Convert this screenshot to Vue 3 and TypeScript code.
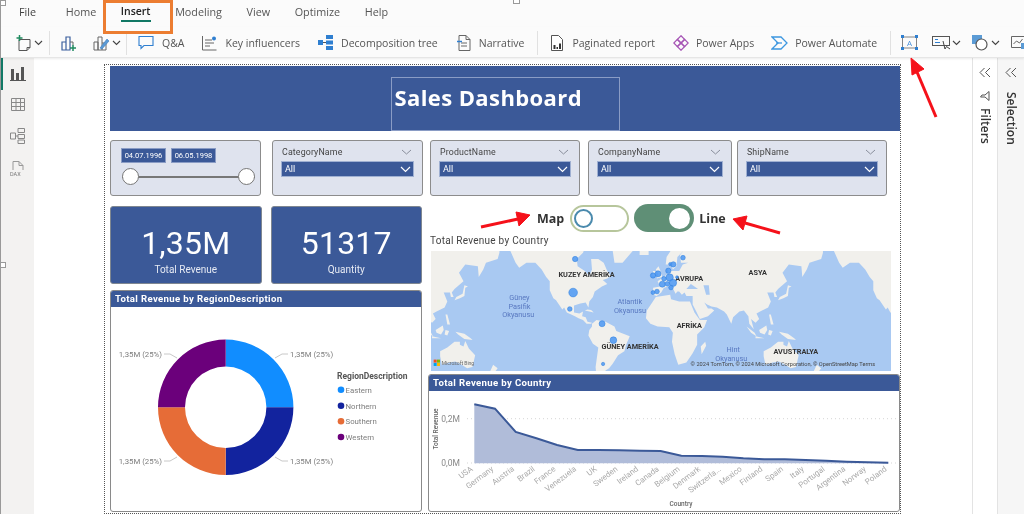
<template>
  <div class="app">
    <div class="tabs">
      <span v-for="tab in tabs" :key="tab" class="tab" :class="{ active: tab === 'Insert' }">{{ tab }}</span>
    </div>

    <div class="toolbar">
      <span class="tool first">
        <svg width="15" height="18" viewBox="0 0 15 18" fill="none"><path d="M3 5.500h11v8l-3 3H3z" stroke="#555"/><path d="M11 16.500v-3h3" stroke="#555"/><path d="M3.500 1v6M.5 4h6" stroke="#1f8a5f" stroke-width="1.500"/></svg>
        <svg class="chev" width="9" height="6" viewBox="0 0 9 6"><path d="M1 1l3.500 3.500L8 1" fill="none" stroke="#444" stroke-width="1.100"/></svg>
      </span>
      <i class="sep s1"></i>
      <span class="tool t-viz">
        <svg width="15" height="18" viewBox="0 0 15 18" fill="none"><path d="M1 8h4v8H1zM5 3h4v13H5z" stroke="#3a5f9e" stroke-width="1.200"/><path d="M9 8h3v3" stroke="#666"/><path d="M12 11v6M9 14h6" stroke="#1f8a5f" stroke-width="1.500"/></svg>
      </span>
      <span class="tool t-custom">
        <svg width="17" height="18" viewBox="0 0 17 18" fill="none"><path d="M1 8h4v8H1zM5 3h4v13H5zM9 9h4v7H9" stroke="#666"/><path d="M7 14L14 5l2 2-7 8z" fill="#5b9bd5" stroke="#3a7cc0" stroke-width=".6"/></svg>
        <svg class="chev" width="9" height="6" viewBox="0 0 9 6"><path d="M1 1l3.500 3.500L8 1" fill="none" stroke="#444" stroke-width="1.100"/></svg>
      </span>
      <i class="sep s2"></i>
      <span class="tool t-qa">
        <svg width="16" height="15" viewBox="0 0 16 15" fill="none"><path d="M1 1.500h14v9H6l-3 3v-3H1z" stroke="#2f7fd0" stroke-width="1.100"/></svg>
        <span>Q&amp;A</span>
      </span>
      <span class="tool t-key">
        <svg width="16" height="16" viewBox="0 0 16 16" fill="none"><path d="M1.500 1v14h14" stroke="#666"/><path d="M4 5h7M4 8h9M4 11h5" stroke="#666"/><circle cx="13" cy="3.500" r="2" fill="#2f7fd0"/></svg>
        <span>Key influencers</span>
      </span>
      <span class="tool t-dec">
        <svg width="16" height="15" viewBox="0 0 16 15"><rect x="0" y="5" width="5" height="5" fill="#2f7fd0"/><rect x="8" y="0" width="7" height="4" fill="#2f7fd0"/><rect x="8" y="5.500" width="7" height="4" fill="#2f7fd0"/><rect x="8" y="11" width="7" height="4" fill="#2f7fd0"/><path d="M5 7.500h3" stroke="#555"/></svg>
        <span>Decomposition tree</span>
      </span>
      <span class="tool t-nar">
        <svg width="14" height="16" viewBox="0 0 14 16" fill="none"><path d="M2 .5h7l4 4v11H2z" stroke="#666"/><path d="M9 .5v4h4" stroke="#666"/><path d="M4 8h6M4 11h6" stroke="#666"/><path d="M0 6.500h5" stroke="#2f7fd0" stroke-width="1.500"/></svg>
        <span>Narrative</span>
      </span>
      <i class="sep s3"></i>
      <span class="tool t-pag">
        <svg width="12" height="16" viewBox="0 0 12 16"><path d="M.5.500h7l4 4v11H.5z" fill="#fff" stroke="#555"/><path d="M2.500 10h2v4h-2zM5.500 12h1.500v2H5.500zM8 8.500h2V14H8z" fill="#333"/></svg>
        <span>Paginated report</span>
      </span>
      <span class="tool t-apps">
        <svg width="16" height="16" viewBox="0 0 16 16" fill="none" stroke="#a654b5" stroke-width="1.300"><path d="M8 .8L11.600 4.400 8 8 4.400 4.400z"/><path d="M11.600 4.400L15.200 8 11.600 11.600 8 8z"/><path d="M4.400 4.400L8 8 4.400 11.600.8 8z"/><path d="M8 8L11.600 11.600 8 15.200 4.400 11.600z"/></svg>
        <span>Power Apps</span>
      </span>
      <span class="tool t-auto">
        <svg width="17" height="14" viewBox="0 0 17 14" fill="none" stroke="#3d97e0" stroke-width="1.300"><path d="M1 1h9l6 6-6 6H1l6-6z"/><path d="M5 7h6"/></svg>
        <span>Power Automate</span>
      </span>
      <i class="sep s4"></i>
      <span class="tool t-box">
        <svg width="17" height="15" viewBox="0 0 17 15"><rect x="1.500" y="2" width="14" height="11" fill="none" stroke="#666" stroke-width=".8"/><text x="8.500" y="11" text-anchor="middle" font-size="8" fill="#4a90d9">A</text><g fill="#2f7fd0"><rect x="0" y="0" width="3" height="3"/><rect x="14" y="0" width="3" height="3"/><rect x="0" y="12" width="3" height="3"/><rect x="14" y="12" width="3" height="3"/></g></svg>
      </span>
      <span class="tool t-btn">
        <svg width="20" height="15" viewBox="0 0 20 15" fill="none"><rect x=".5" y="1.500" width="17" height="9" stroke="#555"/><path d="M3 4.500h3M3 7.500h5" stroke="#2f7fd0" stroke-width="1.200"/><path d="M11 6l2 8 1.500-2.500L18 14" stroke="#444"/></svg>
        <svg class="chev" width="9" height="6" viewBox="0 0 9 6"><path d="M1 1l3.500 3.500L8 1" fill="none" stroke="#444" stroke-width="1.100"/></svg>
      </span>
      <span class="tool t-shape">
        <svg width="16" height="16" viewBox="0 0 16 16" fill="none"><rect x="0" y="0" width="10" height="9" fill="#5b9bd5"/><circle cx="9.500" cy="9.500" r="5.500" fill="#fff" stroke="#555" stroke-width="1.200"/></svg>
        <svg class="chev" width="9" height="6" viewBox="0 0 9 6"><path d="M1 1l3.500 3.500L8 1" fill="none" stroke="#444" stroke-width="1.100"/></svg>
      </span>
      <span class="tool t-last">
        <svg width="17" height="15" viewBox="0 0 17 15" fill="none"><path d="M.5 1.500h14v11H.5z" stroke="#666"/><path d="M2.500 9l3-3 3 2 3-4" stroke="#666"/><rect x="10" y="8" width="7" height="6" fill="#5b9bd5"/></svg>
      </span>
    </div>

    <div class="main">
      <div class="rail">
        <span class="rail-active"></span>
        <svg width="16" height="15" viewBox="0 0 16 15"><path d="M1 3h3v11H1zM6 7h3v7H6zM11 1h3v13h-3z" fill="#555"/><path d="M0 14.500h16" stroke="#555"/></svg>
        <svg width="14" height="13" viewBox="0 0 14 13" fill="none" stroke="#888"><path d="M.5.500h13v12H.5zM.5 4.500h13M.5 8.500h13M5 .5v12M9.500.5v12"/></svg>
        <svg width="15" height="16" viewBox="0 0 15 16" fill="none" stroke="#888"><path d="M.5 5h5v6h-5zM8 .5h6.500v4H8zM8 6.500h6.500v4H8zM8 12h6.500v3.500H8zM5.500 8H8"/></svg>
        <svg width="15" height="17" viewBox="0 0 15 17" fill="none" stroke="#999"><path d="M3 9V.5h6l4 4V9M9 .5v4h4"/><text x="0" y="15" font-size="5.500" fill="#777" stroke="none" font-family="Roboto">DAX</text></svg>
      </div>

      <div class="canvas">
        <div class="report">
          <div class="report-head">
            <div class="title-box">Sales Dashboard</div>
          </div>

          <div class="slicers">
            <div class="slicer date-slicer">
              <div class="dates"><span>04.07.1996</span><span>06.05.1998</span></div>
              <div class="slider"><i></i><i></i></div>
            </div>
            <div
              v-for="s in slicers"
              :key="s.name"
              class="slicer"
              :style="{ width: s.width + 'px', marginLeft: s.gap + 'px' }"
            >
              <div class="slicer-name">
                <span>{{ s.name }}</span>
                <svg width="11" height="6" viewBox="0 0 11 6"><path d="M1 1l4.500 4L10 1" fill="none" stroke="#8a8f9c"/></svg>
              </div>
              <div class="select">
                <span>All</span>
                <svg width="11" height="7" viewBox="0 0 11 7"><path d="M1 1l4.500 4.500L10 1" fill="none" stroke="#fff" stroke-width="1.200"/></svg>
              </div>
            </div>
          </div>

          <div class="columns">
            <div class="col-left">
              <div class="cards">
                <div class="card">
                  <div class="card-value">1,35M</div>
                  <div class="card-label">Total Revenue</div>
                </div>
                <div class="card">
                  <div class="card-value">51317</div>
                  <div class="card-label">Quantity</div>
                </div>
              </div>

              <div class="panel region-panel">
                <div class="panel-title">Total Revenue by RegionDescription</div>
                <svg class="chart" viewBox="111 307 310 204">
                  <path v-for="seg in donut" :key="seg.name" :d="seg.path" :fill="seg.color" />
                  <g v-for="l in donutLabels" :key="l.line">
                    <path :d="l.line" fill="none" stroke="#c8c8c8" />
                    <text :x="l.x" :y="l.y" :text-anchor="l.anchor" class="data-label">1,35M (25%)</text>
                  </g>
                  <text x="337" y="379" class="legend-title">RegionDescription</text>
                  <g v-for="seg in donut" :key="seg.name + 'l'">
                    <circle cx="341" :cy="seg.ly" r="3.300" :fill="seg.color" />
                    <text x="345.500" :y="seg.ly + 3" class="legend-item">{{ seg.name }}</text>
                  </g>
                </svg>
              </div>
            </div>

            <div class="col-right">
              <div class="toggle-row">
                <span class="toggle-text map-text">Map</span>
                <span class="toggle off"><i></i></span>
                <span class="toggle on"><i></i></span>
                <span class="toggle-text">Line</span>
              </div>
              <div class="map-title">Total Revenue by Country</div>
              <svg class="map" viewBox="18 48 1382 358" preserveAspectRatio="none">
                <rect x="18" y="48" width="1382" height="358" fill="#a9c9f2" />
                <path :d="landPath" fill="#f1f0ec" />
                <path :d="inlandSeaPath" fill="#a9c9f2" />
                <text v-for="m in mapLabels" :key="m.t" :x="m.x" :y="m.y" class="map-label">{{ m.t }}</text>
                <text v-for="m in seaLabels" :key="m.t + m.y" :x="m.x" :y="m.y" class="sea-label">{{ m.t }}</text>
                <circle
                  v-for="(b, i) in bubbles"
                  :key="'b' + i"
                  :cx="b[0]"
                  :cy="b[1]"
                  :r="b[2]"
                  fill="#4a97f3"
                  fill-opacity=".85"
                  stroke="#2f7fdc"
                  stroke-width="1.500"
                />
                <rect x="26" y="372" width="9" height="9" fill="#f25022" />
                <rect x="36" y="372" width="9" height="9" fill="#7fba00" />
                <rect x="26" y="382" width="9" height="9" fill="#00a4ef" />
                <rect x="36" y="382" width="9" height="9" fill="#ffb900" />
                <text x="50" y="387" class="bing">Microsoft Bing</text>
                <text x="798" y="392" class="copy">© 2024 TomTom, © 2024 Microsoft Corporation, © OpenStreetMap</text>
                <text x="1305" y="392" class="copy">Terms</text>
              </svg>

              <div class="panel line-panel">
                <div class="panel-title">Total Revenue by Country</div>
                <svg class="chart" viewBox="429 391 470 120">
                  <path d="M467 418.700H899M467 463H899" stroke="#d5d5d5" stroke-dasharray="1 3" fill="none" />
                  <path :d="areaPath" fill="#b0bcd9" />
                  <path :d="linePath" fill="none" stroke="#3b5998" stroke-width="2" />
                  <text x="460" y="422" text-anchor="end" class="axis">0,2M</text>
                  <text x="460" y="466" text-anchor="end" class="axis">0,0M</text>
                  <text transform="translate(438 429) rotate(-90)" text-anchor="middle" class="axis-title">Total Revenue</text>
                  <text
                    v-for="(p, i) in countries"
                    :key="p.name"
                    :transform="`translate(${xAt(i) - 1} 470) rotate(-37)`"
                    text-anchor="end"
                    class="tick"
                  >{{ p.name }}</text>
                  <text x="681" y="506" text-anchor="middle" class="axis-title">Country</text>
                </svg>
              </div>
            </div>
          </div>
        </div>
      </div>

      <div class="side-pane filters">
        <svg width="12" height="11" viewBox="0 0 12 11" fill="none" stroke="#555"><path d="M5.500 1L1 5.500 5.500 10M11 1L6.500 5.500 11 10"/></svg>
        <svg class="funnel" width="10" height="10" viewBox="0 0 10 10" fill="none" stroke="#555"><path d="M.5 1h9L6 5v4.500L4 8V5z" transform="rotate(90 5 5)"/></svg>
        <span class="side-text">Filters</span>
      </div>
      <div class="side-pane selection">
        <svg width="12" height="11" viewBox="0 0 12 11" fill="none" stroke="#555"><path d="M5.500 1L1 5.500 5.500 10M11 1L6.500 5.500 11 10"/></svg>
        <span class="side-text">Selection</span>
      </div>
    </div>

    <svg class="marks" width="1024" height="514" viewBox="0 0 1024 514">
      <rect x="104.500" y="1.500" width="67" height="31" fill="none" stroke="#ec7d31" stroke-width="3" />
      <g fill="#fff" stroke="#999">
        <rect x="0.500" y="0.500" width="5" height="5" />
        <rect x="513.500" y="-2.500" width="6" height="6" />
        <rect x="0.500" y="262.500" width="5" height="5" />
      </g>
      <g fill="#f5111a" stroke="#f5111a">
        <path d="M936 117L917 72" stroke-width="3" />
        <path d="M911 58L924 69 912 75z" />
        <path d="M481 227L518 219" stroke-width="3" />
        <path d="M530 215L516 212 519 226z" />
        <path d="M780 233L745 223" stroke-width="3" />
        <path d="M733 219L747 216 743 230z" />
      </g>
    </svg>
  </div>
</template>

<script setup lang="ts">
const tabs = ["File", "Home", "Insert", "Modeling", "View", "Optimize", "Help"];

const slicers = [
  { name: "CategoryName", width: 151, gap: 11 },
  { name: "ProductName", width: 150, gap: 7 },
  { name: "CompanyName", width: 144, gap: 8 },
  { name: "ShipName", width: 150, gap: 5 },
];

// donut is drawn in page coordinates, the viewBox of the chart matches them
const cx = 225.7;
const cy = 407.3;
const outer = 67.7;
const inner = 40.7;

const arc = (from: number, to: number) => {
  const pt = (r: number, a: number) => {
    const rad = ((a - 90) * Math.PI) / 180;
    return `${(cx + r * Math.cos(rad)).toFixed(2)} ${(cy + r * Math.sin(rad)).toFixed(2)}`;
  };
  return `M${pt(outer, from)}A${outer} ${outer} 0 0 1 ${pt(outer, to)}L${pt(inner, to)}A${inner} ${inner} 0 0 0 ${pt(inner, from)}Z`;
};

const donut = [
  { name: "Eastern", color: "#118dff", path: arc(0, 90), ly: 389.7 },
  { name: "Northern", color: "#12239e", path: arc(90, 180), ly: 405.7 },
  { name: "Southern", color: "#e66c37", path: arc(180, 270), ly: 421.3 },
  { name: "Western", color: "#6b007b", path: arc(270, 360), ly: 437 },
];

const donutLabels = [
  { line: "M275 358L282 354H288", x: 290, y: 357, anchor: "start" },
  { line: "M275 457L282 461H288", x: 290, y: 464, anchor: "start" },
  { line: "M177 358L170 354H164", x: 162, y: 357, anchor: "end" },
  { line: "M177 457L170 461H164", x: 162, y: 464, anchor: "end" },
];

// coarse coastlines as lon,lat lists, mercator projected and repeated because the map wraps
const WORLD = 972;
const project = (lon: number, lat: number, shift: number) => {
  const m = Math.log(Math.tan(Math.PI / 4 + (lat * Math.PI) / 360));
  return `${(445 + (lon + 98) * 2.7 + shift).toFixed(1)} ${(286.5 - 154.7 * m).toFixed(1)}`;
};

const toPath = (polys: number[][]) =>
  [-WORLD, 0, WORLD]
    .map((shift) =>
      polys
        .map((poly) => {
          const pts: string[] = [];
          for (let i = 0; i < poly.length; i += 2) pts.push(project(poly[i], poly[i + 1], shift));
          return `M${pts.join("L")}Z`;
        })
        .join(""),
    )
    .join("");

const landPath = toPath([
  // north and central america
  [-168, 66, -162, 60, -158, 57, -150, 60, -140, 60, -133, 56, -128, 51, -124, 48, -124, 41, -120, 34, -117, 32, -110, 23, -108, 25, -105, 20, -96, 16, -92, 14, -87, 12, -83, 8, -78, 8, -77, 9, -82, 10, -84, 15, -88, 16, -87, 21, -91, 19, -97, 20, -97, 27, -90, 29, -84, 30, -81, 25, -80, 31, -76, 35, -74, 40, -70, 42, -66, 44, -60, 46, -65, 49, -60, 50, -56, 52, -60, 55, -64, 60, -70, 62, -78, 62, -77, 56, -80, 52, -85, 55, -93, 58, -94, 62, -87, 65, -80, 72, -168, 72],
  [-52, 60, -43, 60, -22, 70, -20, 75, -60, 75, -54, 66],
  [-24, 64, -14, 64, -14, 66.5, -24, 66.5],
  [-85, 22, -75, 20, -78, 22.5, -82, 23],
  // south america
  [-77, 8, -72, 12, -62, 10, -52, 5, -50, 0, -35, -6, -39, -15, -41, -22, -48, -26, -54, -34, -58, -38, -62, -40, -65, -45, -72, -45, -73, -37, -70, -18, -76, -14, -81, -5, -80, 1, -77, 5],
  // africa
  [-6, 35, 10, 37, 11, 33, 20, 31, 32, 31, 37, 20, 43, 12, 51, 12, 48, 4, 40, -4, 40, -15, 35, -24, 28, -33, 19, -35, 15, -25, 12, -12, 13, -2, 9, 4, -4, 5, -12, 8, -17, 14, -16, 22, -10, 30],
  [49, -12, 50, -16, 45, -25, 44, -17],
  // eurasia
  [-9, 37, -9, 43, -1, 44, -4, 48, 3, 51, 8, 54, 8, 57, 11, 55, 20, 55, 24, 59, 30, 60, 22, 60, 21, 64, 25, 66, 18, 63, 17, 58, 13, 56, 11, 59, 5, 59, 6, 63, 14, 68, 25, 71, 40, 67, 70, 72, 140, 73, 180, 70, 180, 65, 178, 62, 165, 60, 162, 56, 157, 51, 156, 58, 142, 59, 135, 54, 140, 48, 130, 42, 127, 39, 129, 35, 126, 35, 125, 39, 121, 39, 118, 39, 122, 31, 119, 25, 110, 21, 106, 19, 109, 13, 105, 9, 100, 13, 103, 2, 98, 8, 97, 16, 92, 22, 87, 21, 80, 15, 78, 8, 73, 18, 70, 21, 62, 25, 56, 26, 51, 28, 48, 30, 52, 24, 56, 24, 59, 22, 52, 16, 43, 13, 39, 21, 35, 28, 35, 36, 28, 36, 26, 39, 23, 37, 20, 40, 18, 40, 16, 38, 12, 44, 8, 44, 3, 43, 0, 39, -5, 36],
  [-5, 50, 1, 51, 0, 54, -3, 58, -6, 56, -3, 53],
  [-10, 52, -6, 52, -6, 55, -9, 55],
  // japan, islands of south east asia
  [130, 32, 136, 34, 141, 36, 142, 43, 145, 44, 141, 45, 139, 38, 132, 35],
  [95, 5, 104, -2, 106, -6, 100, -2],
  [109, 1, 117, 6, 118, 1, 115, -4, 110, -2],
  [105, -6, 115, -8, 105, -8],
  [120, 1, 124, 0, 122, -5, 119, -4],
  [131, -1, 141, -3, 148, -8, 150, -10, 141, -9, 134, -4],
  [120, 18, 122, 18, 125, 7, 122, 7],
  // australia, new zealand
  [114, -22, 122, -18, 130, -12, 136, -12, 136, -15, 140, -17, 142, -11, 146, -19, 153, -26, 150, -37, 144, -38, 138, -35, 131, -32, 124, -33, 116, -35, 114, -27],
  [173, -35, 178, -38, 170, -46, 167, -45],
]);

const inlandSeaPath = toPath([
  [28, 42, 33, 46, 41, 42, 35, 42],
  [47, 45, 53, 45, 54, 37, 50, 37],
]);

const mapLabels = [
  { t: "KUZEY AMERİKA", x: 401, y: 126 },
  { t: "AVRUPA", x: 752, y: 138 },
  { t: "ASYA", x: 972, y: 119 },
  { t: "AFRİKA", x: 756, y: 279 },
  { t: "GÜNEY AMERİKA", x: 530, y: 339 },
  { t: "AVUSTRALYA", x: 1047, y: 355 },
];

const seaLabels = [
  { t: "Güney", x: 253, y: 195 },
  { t: "Pasifik", x: 251, y: 220 },
  { t: "Okyanusu", x: 232, y: 246 },
  { t: "Atlantik", x: 578, y: 206 },
  { t: "Okyanusu", x: 568, y: 232 },
  { t: "Hint", x: 906, y: 350 },
  { t: "Okyanusu", x: 872, y: 376 },
];

const bubbles = [
  [451, 72, 8], [445, 172, 13], [435, 221, 7], [532, 265, 9], [566, 314, 10], [535, 385, 5],
  [775, 68, 7], [737, 87, 5], [746, 88, 8], [731, 107, 8], [685, 121, 8], [700, 116, 9],
  [718, 131, 7], [735, 127, 11], [757, 126, 4], [713, 147, 9], [728, 146, 7], [745, 143, 11],
  [739, 157, 7], [685, 172, 6], [697, 169, 7],
];

const countries = [
  { name: "USA", y: 404.3 },
  { name: "Germany", y: 408.7 },
  { name: "Austria", y: 432 },
  { name: "Brazil", y: 438.3 },
  { name: "France", y: 445 },
  { name: "Venezuela", y: 450 },
  { name: "UK", y: 450 },
  { name: "Sweden", y: 450.3 },
  { name: "Ireland", y: 450.7 },
  { name: "Canada", y: 451 },
  { name: "Belgium", y: 455.7 },
  { name: "Denmark", y: 456 },
  { name: "Switzerla...", y: 456.7 },
  { name: "Mexico", y: 458.3 },
  { name: "Finland", y: 459.3 },
  { name: "Spain", y: 459.3 },
  { name: "Italy", y: 460 },
  { name: "Portugal", y: 460.7 },
  { name: "Argentina", y: 461.7 },
  { name: "Norway", y: 462.3 },
  { name: "Poland", y: 462.7 },
];

const xAt = (i: number) => 474.3 + 20.7 * i;

const linePath = countries.map((p, i) => `${i ? "L" : "M"}${xAt(i).toFixed(1)} ${p.y}`).join("");
const areaPath = `${linePath}L${xAt(20).toFixed(1)} 463.3L${xAt(0).toFixed(1)} 463.3Z`;
</script>

<style scoped>
.app {
  position: relative;
  width: 1024px;
  height: 514px;
  overflow: hidden;
  background: #fff;
  display: flex;
  flex-direction: column;
  border-left: 1px solid #999;
  box-sizing: border-box;
  font-family: "Open Sans", "Liberation Sans", sans-serif;
  filter: blur(0.35px);
}

.tabs {
  height: 27px;
  flex-shrink: 0;
  display: flex;
  align-items: flex-start;
  padding: 4px 0 0 18px;
  gap: 24.6px;
  background: #fbfbfb;
  box-sizing: border-box;
}

.tab {
  position: relative;
  font-size: 10.8px;
  line-height: 15px;
  color: #555;
}

.tab:first-child {
  margin-right: 5px;
  color: #444;
}

.tab.active {
  color: #222;
  font-weight: 600;
  font-size: 10.5px;
}

.tab.active::after {
  content: "";
  position: absolute;
  left: 0;
  right: 0;
  top: 16px;
  height: 2px;
  background: #117865;
}

.toolbar {
  height: 31px;
  flex-shrink: 0;
  display: flex;
  align-items: center;
  background: #fbfbfb;
  border-bottom: 1px solid #e6e6e6;
  box-shadow: 0 1px 2px rgba(0, 0, 0, 0.08);
  box-sizing: border-box;
  position: relative;
  z-index: 1;
  padding: 1px 0 0 15px;
  font-size: 10.5px;
  color: #555;
  white-space: nowrap;
}

.tool {
  display: flex;
  align-items: center;
  gap: 8px;
  flex-shrink: 0;
}

.chev {
  margin-left: -3px;
}

.sep {
  width: 1px;
  height: 24px;
  background: #e1e1e1;
  flex-shrink: 0;
}

.tool.first { gap: 6px; }
.s1 { margin-left: 6px; }
.t-viz { margin-left: 11px; }
.t-custom { margin-left: 17px; gap: 5px; }
.s2 { margin-left: 5px; }
.t-qa { margin-left: 11px; }
.t-key { margin-left: 17px; }
.t-dec { margin-left: 18px; gap: 7px; }
.t-nar { margin-left: 19px; }
.s3 { margin-left: 13px; }
.t-pag { margin-left: 13px; gap: 9px; }
.t-apps { margin-left: 18px; gap: 7px; }
.t-auto { margin-left: 17px; gap: 7px; }
.s4 { margin-left: 13px; }
.t-box { margin-left: 10px; }
.t-btn { margin-left: 14px; gap: 3px; }
.t-shape { margin-left: 11px; gap: 6px; }
.t-last { margin-left: 11px; }

.main {
  flex: 1;
  display: flex;
  min-height: 0;
}

.rail {
  position: relative;
  width: 33px;
  flex-shrink: 0;
  background: #f3f2f1;
  display: flex;
  flex-direction: column;
  align-items: center;
  padding-top: 8px;
  gap: 17px;
  box-sizing: border-box;
}

.rail-active {
  position: absolute;
  left: 0;
  top: 0;
  width: 2px;
  height: 32px;
  background: #117865;
}

.canvas {
  flex: 1;
  min-width: 0;
  padding: 6px 0 0 70px;
  box-sizing: border-box;
}

.report {
  width: 797px;
  height: 450px;
  border: 1px dotted #555;
  box-sizing: border-box;
  padding: 1px 0 0 5px;
  display: flex;
  flex-direction: column;
}

.report-head {
  height: 65px;
  flex-shrink: 0;
  background: #3b5998;
  display: flex;
  justify-content: center;
  align-items: flex-end;
}

.title-box {
  width: 229px;
  height: 54px;
  border: 1px solid #8a9cc5;
  box-sizing: border-box;
  color: #fff;
  font-family: "Open Sans", sans-serif;
  font-weight: 700;
  font-size: 22px;
  letter-spacing: 0.4px;
  padding: 3px 0 0 3px;
  line-height: 32px;
}

.slicers {
  display: flex;
  margin-top: 9px;
  height: 56px;
  flex-shrink: 0;
}

.slicer {
  background: #dfe3ee;
  border: 1px solid #8c8c8c;
  border-radius: 3px;
  box-sizing: border-box;
  padding: 3px 8px 0 8px;
  font-family: Roboto, sans-serif;
}

.date-slicer {
  width: 151px;
  padding: 7px 7px 0 10px;
}

.dates {
  display: flex;
  gap: 5px;
}

.dates span {
  width: 45px;
  height: 15px;
  background: #3b5998;
  border: 1px solid #8a9cc5;
  box-sizing: border-box;
  color: #fff;
  font-size: 7.5px;
  line-height: 13px;
  text-align: center;
}

.slider {
  display: flex;
  justify-content: space-between;
  align-items: center;
  margin: 5px 0 0 1px;
  height: 17px;
  width: 133px;
  background: linear-gradient(#777, #777) center / 100% 2px no-repeat;
}

.slider i {
  width: 17px;
  height: 17px;
  background: #fff;
  border: 1.5px solid #777;
  border-radius: 50%;
  box-sizing: border-box;
}

.slicer-name {
  display: flex;
  justify-content: space-between;
  align-items: center;
  height: 15px;
  padding: 0 2px 0 1px;
  font-size: 8.8px;
  letter-spacing: 0.15px;
  color: #444;
}

.select {
  margin: 2px 0 0 0;
  height: 16px;
  background: #3b5998;
  border: 1px solid #9fb0d2;
  box-sizing: border-box;
  display: flex;
  justify-content: space-between;
  align-items: center;
  padding: 0 2px 0 3px;
  color: #fff;
  font-size: 9px;
}

.columns {
  display: flex;
  flex: 1;
  min-height: 0;
  margin-top: 8px;
  gap: 6px;
}

.col-left {
  width: 312px;
  flex-shrink: 0;
  padding-top: 2px;
  display: flex;
  flex-direction: column;
}

.cards {
  display: flex;
  gap: 9px;
  height: 78px;
  flex-shrink: 0;
}

.card {
  flex: 1;
  background: #3b5998;
  border: 1px solid #7f8791;
  border-radius: 3px;
  box-sizing: border-box;
  color: #fff;
  text-align: center;
  font-family: Roboto, sans-serif;
  padding-top: 17px;
}

.card-value {
  font-size: 32px;
  line-height: 38px;
  letter-spacing: 0.2px;
}

.card-label {
  font-size: 10px;
  line-height: 14px;
  margin-top: 1px;
  color: #e6eaf3;
}

.panel {
  border: 1px solid #8a8a8a;
  border-radius: 3px;
  box-sizing: border-box;
  overflow: hidden;
  background: #fff;
  display: flex;
  flex-direction: column;
}

.region-panel {
  margin-top: 6px;
  height: 222px;
}

.panel-title {
  height: 16px;
  flex-shrink: 0;
  background: #3b5998;
  color: #fff;
  font-family: Roboto, sans-serif;
  font-size: 9.6px;
  font-weight: 700;
  letter-spacing: 0.35px;
  line-height: 16px;
  padding-left: 4px;
}

.chart {
  display: block;
  flex: 1;
  min-height: 0;
  width: 100%;
}

.data-label,
.legend-item {
  font-family: Roboto, sans-serif;
  font-size: 7.8px;
  fill: #7d7d7d;
}

.legend-title {
  font-family: Roboto, sans-serif;
  font-size: 8.5px;
  font-weight: 700;
  fill: #555;
}

.col-right {
  width: 472px;
  display: flex;
  flex-direction: column;
}

.toggle-row {
  height: 28px;
  flex-shrink: 0;
  display: flex;
  align-items: center;
  padding-left: 109px;
  gap: 5px;
}

.toggle-text {
  font-family: "Open Sans", sans-serif;
  font-size: 12.5px;
  font-weight: 700;
  color: #333;
}

.map-text {
  margin-right: 1px;
}

.toggle {
  width: 59px;
  height: 27px;
  border-radius: 14px;
  box-sizing: border-box;
  display: flex;
  align-items: center;
}

.toggle.off {
  background: #fff;
  border: 2px solid #b7c69c;
  padding-left: 2px;
}

.toggle.off i {
  width: 19px;
  height: 19px;
  border: 2px solid #4a8aad;
  border-radius: 50%;
  box-sizing: border-box;
}

.toggle.on {
  width: 60px;
  height: 28px;
  background: #5f8f76;
  justify-content: flex-end;
  padding-right: 4px;
}

.toggle.on i {
  width: 21px;
  height: 21px;
  border-radius: 50%;
  background: #fff;
}

.map-title {
  font-family: Roboto, sans-serif;
  font-size: 10px;
  letter-spacing: 0.25px;
  line-height: 14px;
  margin: 2px 0 0 2px;
  color: #444;
}

.map {
  display: block;
  width: 460px;
  height: 120px;
  margin: 3px 0 0 3px;
  flex-shrink: 0;
}

.map-label {
  font-family: Roboto, sans-serif;
  font-size: 22px;
  font-weight: 700;
  fill: #333;
}

.sea-label {
  font-family: Roboto, sans-serif;
  font-size: 22px;
  fill: #5878c0;
}

.bing {
  font-family: Roboto, sans-serif;
  font-size: 15px;
  fill: #666;
}

.copy {
  font-family: Roboto, sans-serif;
  font-size: 17px;
  fill: #444;
}

.line-panel {
  margin-top: 3px;
  height: 138px;
}

.axis {
  font-family: Roboto, sans-serif;
  font-size: 8.5px;
  fill: #888;
}

.axis-title {
  font-family: Roboto, sans-serif;
  font-size: 6.5px;
  font-weight: 500;
  fill: #666;
}

.tick {
  font-family: Roboto, sans-serif;
  font-size: 8px;
  fill: #aaa;
}

.side-pane {
  flex-shrink: 0;
  display: flex;
  flex-direction: column;
  align-items: center;
  padding-top: 9px;
  box-sizing: border-box;
  border-left: 1px solid #e3e3e3;
}

.filters {
  width: 25px;
  background: #fff;
}

.selection {
  width: 27px;
  background: #f6f6f6;
}

.funnel {
  margin-top: 13px;
}

.side-text {
  writing-mode: vertical-rl;
  font-size: 12px;
  font-weight: 600;
  color: #333;
}

.filters .side-text {
  margin-top: 7px;
}

.selection .side-text {
  margin-top: 14px;
}

.marks {
  position: absolute;
  left: -1px;
  top: 0;
  pointer-events: none;
  z-index: 5;
}
</style>

<style>
html,
body {
  margin: 0;
  background: #fff;
}
</style>
